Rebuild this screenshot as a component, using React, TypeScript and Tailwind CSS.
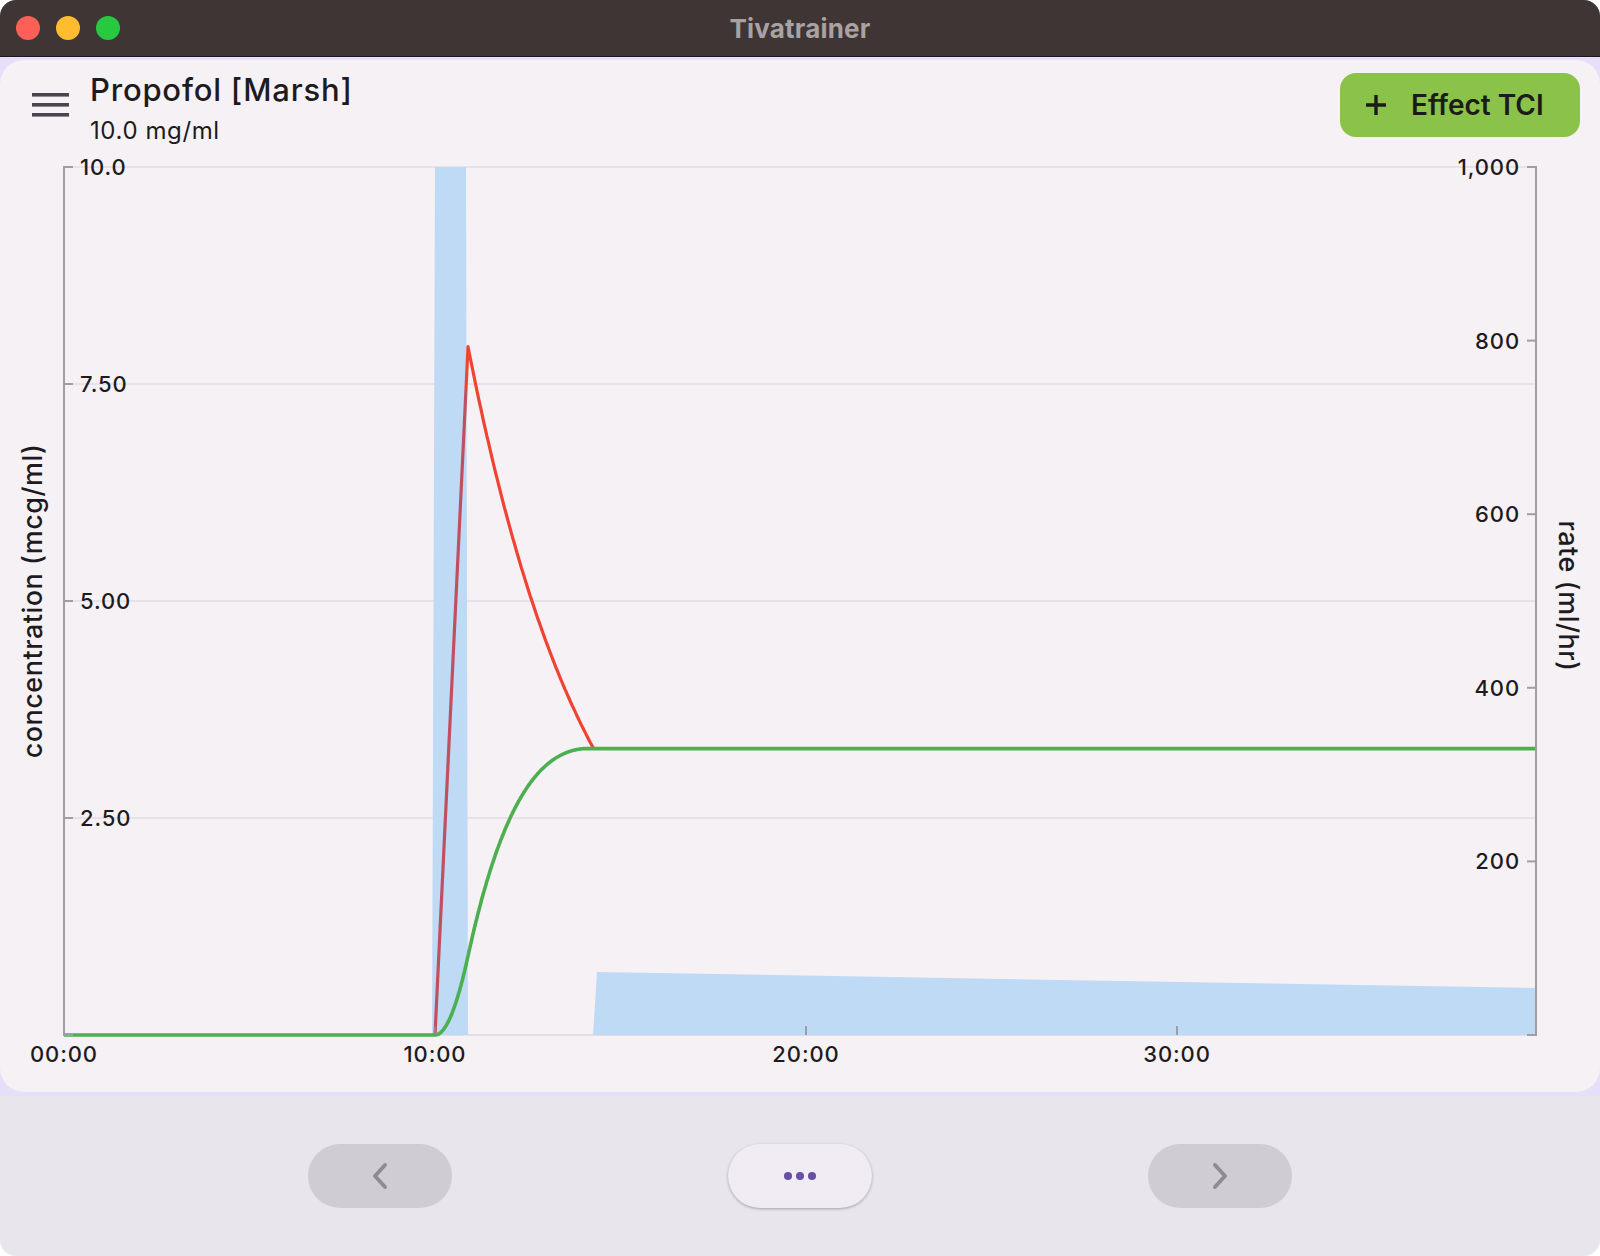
import React from 'react';

// chart geometry in page pixels
const X0 = 64;
const X1 = 1536;
const Y0 = 1035;
const PX_PER_MIN = 37.1;
const PX_PER_UNIT = 86.8;

const tx = (t: number) => X0 + t * PX_PER_MIN;
const cy = (c: number) => Y0 - c * PX_PER_UNIT;

const PEAK_T = 10.89;
const MEET_T = 14.28;
const TARGET = 3.3;

// plasma concentration
function cp(t: number) {
  if (t < 10) return 0;
  if (t < PEAK_T) return (7.93 * (t - 10)) / (PEAK_T - 10);
  if (t < MEET_T) return 0.67 + 7.26 * Math.exp(-0.3 * (t - PEAK_T));
  return TARGET;
}

function plasmaPath() {
  const pts: string[] = [];
  for (let t = PEAK_T; t <= MEET_T + 0.001; t += 0.03) {
    pts.push(`${tx(t).toFixed(1)},${cy(cp(t)).toFixed(1)}`);
  }
  return `M 466 389 L 468 347 L ${pts.join(' L ')}`;
}

// effect site: first order lag behind plasma, scaled to meet target
function effectPath() {
  const ke0 = 0.29;
  const dt = 0.004;
  const raw: [number, number][] = [];
  let ce = 0;
  for (let t = 10; t <= MEET_T + 0.0001; t += dt) {
    raw.push([t, ce]);
    ce += ke0 * (cp(t) - ce) * dt;
  }
  const scale = TARGET / raw[raw.length - 1][1];
  const pts: string[] = [];
  let max = 0;
  raw.forEach(([t, c], i) => {
    if (i % 5 !== 0 && i !== raw.length - 1) return;
    max = Math.max(max, Math.min(c * scale, TARGET));
    pts.push(`${tx(t).toFixed(1)},${cy(max).toFixed(1)}`);
  });
  return `M ${X0} ${Y0} L ${pts.join(' L ')} L ${X1} ${cy(TARGET).toFixed(1)}`;
}

const leftTicks = [
  { v: 10, label: '10.0' },
  { v: 7.5, label: '7.50' },
  { v: 5, label: '5.00' },
  { v: 2.5, label: '2.50' },
];
const rightTicks = [
  { v: 1000, label: '1,000' },
  { v: 800, label: '800' },
  { v: 600, label: '600' },
  { v: 400, label: '400' },
  { v: 200, label: '200' },
];
const timeTicks = [0, 10, 20, 30];

const axisText = {
  fontFamily: 'Inter, "Noto Sans", sans-serif',
  fontSize: 22,
  fontWeight: 500,
  letterSpacing: 0.9,
  fill: '#1d1b20',
};

const titleText = {
  fontFamily: 'Inter, "Noto Sans", sans-serif',
  fontSize: 27,
  fontWeight: 500,
  letterSpacing: 0.5,
  fill: '#1d1b20',
};

function Chart() {
  return (
    <svg className="block" width="1600" height="947" viewBox="0 145 1600 947">
      {leftTicks.map((t) => (
        <line key={t.v} x1={X0} x2={X1} y1={cy(t.v)} y2={cy(t.v)} stroke="#e7e2e7" strokeWidth="2" />
      ))}
      <line x1={X0} x2={X1} y1={Y0} y2={Y0} stroke="#e2dde2" strokeWidth="2" />

      <path d="M 432 1035 L 435 167 L 466 167 L 468 1035 Z" fill="#bfdaf5" />
      <path d="M 593 1035 L 597 972 L 1536 988 L 1536 1035 Z" fill="#bfdaf5" />

      <path d="M 435 1035 L 466 389" stroke="#c0505f" strokeWidth="3.2" fill="none" />
      <path d={plasmaPath()} stroke="#f04433" strokeWidth="3.2" fill="none" strokeLinejoin="round" />
      <path d={effectPath()} stroke="#4caf50" strokeWidth="3.6" fill="none" strokeLinejoin="round" />

      {/* axes */}
      <line x1={X0} x2={X0} y1={166} y2={1036} stroke="#a19da1" strokeWidth="2" />
      <line x1={X1} x2={X1} y1={166} y2={1036} stroke="#a19da1" strokeWidth="2" />
      {[...leftTicks.map((t) => t.v), 0].map((v) => (
        <line key={v} x1={X0} x2={X0 + 9} y1={cy(v)} y2={cy(v)} stroke="#a19da1" strokeWidth="2" />
      ))}
      {[...rightTicks.map((t) => t.v), 0].map((v) => (
        <line key={v} x1={X1 - 9} x2={X1} y1={Y0 - v * 0.868} y2={Y0 - v * 0.868} stroke="#a19da1" strokeWidth="2" />
      ))}
      {timeTicks.slice(1).map((m) => (
        <line key={m} x1={tx(m)} x2={tx(m)} y1={1026} y2={1035} stroke="#8f8a90" strokeWidth="1.5" />
      ))}

      {leftTicks.map((t) => (
        <text key={t.v} x={80} y={cy(t.v) + 8} {...axisText}>
          {t.label}
        </text>
      ))}
      {rightTicks.map((t) => (
        <text key={t.v} x={1520} y={Y0 - t.v * 0.868 + 8} textAnchor="end" {...axisText}>
          {t.label}
        </text>
      ))}
      {timeTicks.map((m) => (
        <text key={m} x={tx(m)} y={1062} textAnchor="middle" {...axisText}>
          {`${String(m).padStart(2, '0')}:00`}
        </text>
      ))}

      <text transform="translate(42 601) rotate(-90)" textAnchor="middle" {...titleText}>
        concentration (mcg/ml)
      </text>
      <text transform="translate(1559 596) rotate(90)" textAnchor="middle" {...titleText}>
        rate (ml/hr)
      </text>
    </svg>
  );
}

function Chevron({ dir }: { dir: 'left' | 'right' }) {
  return (
    <svg width="18" height="26" viewBox="0 0 18 26" fill="none">
      <path
        d={dir === 'left' ? 'M14 2 L4 13 L14 24' : 'M4 2 L14 13 L4 24'}
        stroke="#8e8a93"
        strokeWidth="3.8"
        strokeLinecap="round"
        strokeLinejoin="round"
      />
    </svg>
  );
}

export default function App() {
  return (
    <div className="h-[1256px] w-[1600px] bg-white font-['Inter','Noto_Sans',sans-serif]">
      <div className="flex h-full flex-col overflow-hidden rounded-[16px] bg-[#e8e5ec]">
        {/* title bar */}
        <div className="grid h-[57px] shrink-0 grid-cols-[1fr_auto_1fr] items-center border-b border-[#1f1a19] bg-[#3e3534]">
          <div className="flex items-center gap-[16px] pl-[16px]">
            <span className="h-[24px] w-[24px] rounded-full bg-[#fe5f57]" />
            <span className="h-[24px] w-[24px] rounded-full bg-[#febc2e]" />
            <span className="h-[24px] w-[24px] rounded-full bg-[#28c840]" />
          </div>
          <span className="text-[26px] font-bold tracking-[0.2px] text-[#a8a3a2]">Tivatrainer</span>
          <div />
        </div>

        {/* main card */}
        <div className="shrink-0 bg-[#e6dffa] pt-[3px] pb-[4px]">
          <div className="h-[1032px] overflow-hidden rounded-[24px] bg-[#f6f1f5]">
            <div className="flex items-start justify-between pt-[12px] pr-[20px] pl-[32px]">
              <div className="flex items-start gap-[21px]">
                <svg className="mt-[21px]" width="37" height="24" viewBox="0 0 37 24">
                  <rect x="0" y="0" width="37" height="3.6" fill="#49454f" />
                  <rect x="0" y="10" width="37" height="3.6" fill="#49454f" />
                  <rect x="0" y="20" width="37" height="3.6" fill="#49454f" />
                </svg>
                <div className="flex flex-col">
                  <h1 className="text-[31px] leading-[36px] font-medium tracking-[0.8px] text-[#1d1b20]">
                    Propofol [Marsh]
                  </h1>
                  <p className="mt-[9px] text-[24px] leading-[28px] tracking-[0.6px] text-[#1d1b20]">10.0 mg/ml</p>
                </div>
              </div>
              <button className="mt-[1px] flex h-[64px] w-[240px] items-center gap-[24px] rounded-[16px] bg-[#8bc34a] pl-[25px] text-[#1b1b1b]">
                <svg width="22" height="22" viewBox="0 0 22 22">
                  <path d="M11 1 V21 M1 11 H21" stroke="#1b1b1b" strokeWidth="3.4" />
                </svg>
                <span className="text-[28px] font-semibold">Effect TCI</span>
              </button>
            </div>
            <Chart />
          </div>
        </div>

        {/* bottom nav */}
        <div className="flex flex-1 items-center justify-center gap-[276px]">
          <button className="flex h-[64px] w-[144px] items-center justify-center rounded-full bg-[#d0ccd3]">
            <Chevron dir="left" />
          </button>
          <button className="flex h-[64px] w-[144px] items-center justify-center gap-[4px] rounded-full bg-[#f1ecf4] shadow-[0_1px_3px_rgba(0,0,0,0.3)]">
            <span className="h-[8px] w-[8px] rounded-full bg-[#6750a4]" />
            <span className="h-[8px] w-[8px] rounded-full bg-[#6750a4]" />
            <span className="h-[8px] w-[8px] rounded-full bg-[#6750a4]" />
          </button>
          <button className="flex h-[64px] w-[144px] items-center justify-center rounded-full bg-[#d0ccd3]">
            <Chevron dir="right" />
          </button>
        </div>
      </div>
    </div>
  );
}
